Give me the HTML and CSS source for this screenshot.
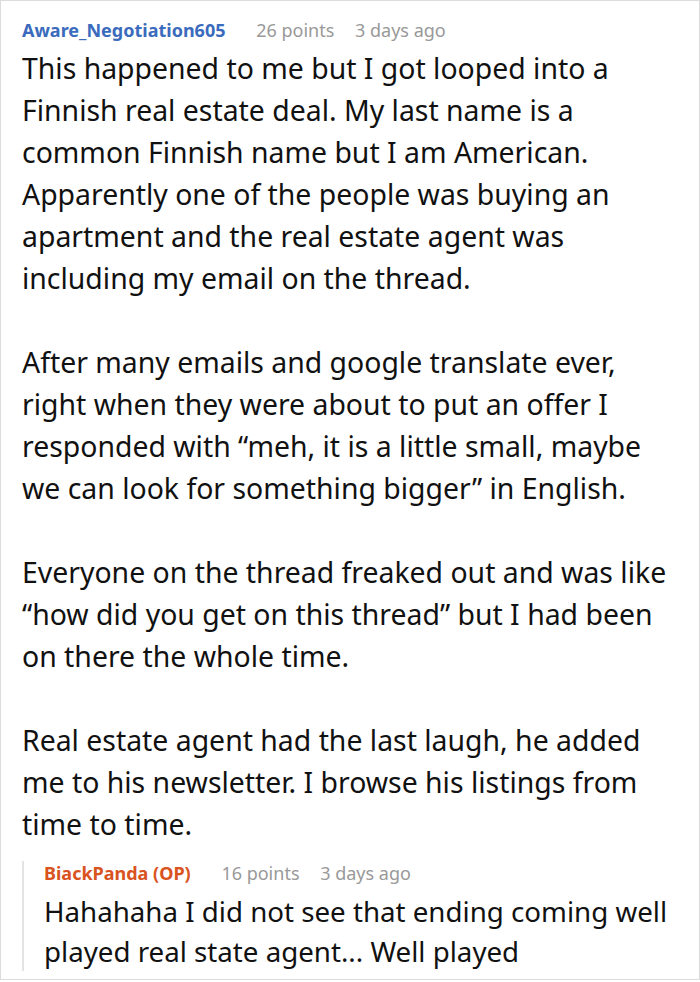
FILE: index.html
```html
<!DOCTYPE html>
<html>
<head>
<meta charset="utf-8">
<link rel="stylesheet" href="styles.css">
</head>
<body>
<div class="frame">
  <div class="comment">
    <div class="meta">
      <span class="author">Aware_Negotiation605</span>
      <span class="points">26 points</span>
      <span class="time">3 days ago</span>
    </div>
    <div class="body">
      <p>This happened to me but I got looped into a Finnish real estate deal. My last name is a common Finnish name but I am American. Apparently one of the people was buying an apartment and the real estate agent was including my email on the thread.</p>
      <p>After many emails and google translate ever, right when they were about to put an offer I responded with “meh, it is a little small, maybe we can look for something bigger” in English.</p>
      <p>Everyone on the thread freaked out and was like “how did you get on this thread” but I had been on there the whole time.</p>
      <p>Real estate agent had the last laugh, he added me to his newsletter. I browse his listings from time to time.</p>
    </div>
    <div class="reply">
      <div class="meta">
        <span class="author op">BiackPanda (OP)</span>
        <span class="points">16 points</span>
        <span class="time">3 days ago</span>
      </div>
      <div class="body">
        <p>Hahahaha I did not see that ending coming well played real state agent... Well played</p>
      </div>
    </div>
  </div>
</div>
</body>
</html>
```
FILE: styles.css
```css
html, body {
  margin: 0;
  padding: 0;
  background: #fff;
}
.frame {
  box-sizing: border-box;
  width: 700px;
  height: 980px;
  border: 1px solid #dcdcdc;
  overflow: hidden;
  font-family: "Noto Sans", sans-serif;
  color: #111;
}
.comment {
  padding: 17px 16px 0 21px;
}
.meta {
  font-size: 18px;
  line-height: 24px;
  height: 24px;
  white-space: nowrap;
}
.author {
  font-weight: 700;
  color: #3a6bbd;
}
.author.op {
  color: #d9531e;
}
.points {
  color: #999;
  margin-left: 26px;
}
.time {
  color: #999;
  margin-left: 16px;
}
.body {
  margin-top: 5px;
  font-size: 28.4px;
  line-height: 42px;
}
.body p {
  margin: 0 0 42px 0;
}
.body p:last-child {
  margin-bottom: 0;
}
.reply {
  margin-top: 16px;
  padding-left: 20px;
  border-left: 2px solid #e4e4e4;
}
.reply .body {
  margin-top: 6px;
  font-size: 27.7px;
  line-height: 40px;
}
```
